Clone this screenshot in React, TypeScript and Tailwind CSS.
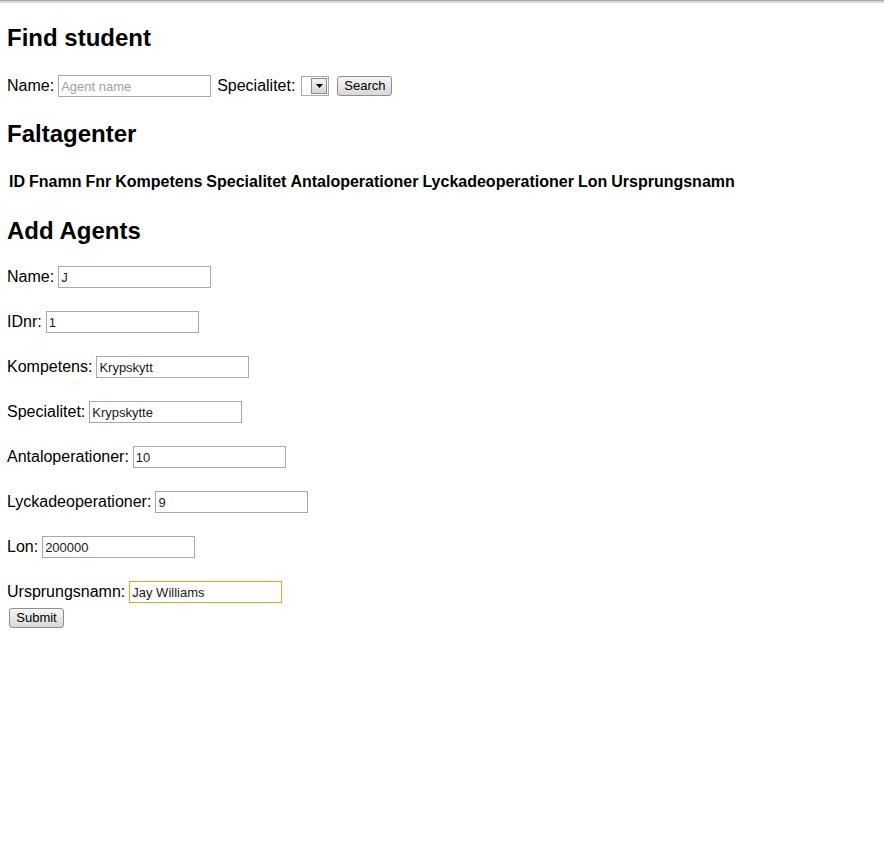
import React from "react";

const inputCls =
  "h-[22px] w-[153px] border border-[#a9a9a9] bg-white px-[2px] text-[13px] leading-[18px] text-[#1a1a1a] outline-none";

function Row({ label, value, focused }: { label: string; value: string; focused?: boolean }) {
  return (
    <div className="flex h-[22px] items-center">
      <span className="text-[16px] leading-[18px]">{label}</span>
      <input
        readOnly
        value={value}
        className={
          "ml-[4px] " +
          inputCls +
          (focused ? " !border-[#e5a53a] shadow-[0_0_1px_#f0c070]" : "")
        }
      />
    </div>
  );
}

export default function App() {
  const cols = [
    "ID",
    "Fnamn",
    "Fnr",
    "Kompetens",
    "Specialitet",
    "Antaloperationer",
    "Lyckadeoperationer",
    "Lon",
    "Ursprungsnamn",
  ];
  const rows: [string, string, boolean?][] = [
    ["Name:", "J"],
    ["IDnr:", "1"],
    ["Kompetens:", "Krypskytt"],
    ["Specialitet:", "Krypskytte"],
    ["Antaloperationer:", "10"],
    ["Lyckadeoperationer:", "9"],
    ["Lon:", "200000"],
    ["Ursprungsnamn:", "Jay Williams", true],
  ];
  return (
    <div
      className="min-h-[859px] w-[884px] bg-white text-black"
      style={{ fontFamily: '"Liberation Sans", Arial, sans-serif' }}
    >
      <div className="h-[1px] bg-[#a8a8a8]" />
      <div className="h-[2px] bg-[#d8d8d8]" />
      <div className="px-[7px]">
        <h2 className="mt-[21px] text-[24px] font-bold leading-[28px]">Find student</h2>
        <div className="mt-[23px] flex h-[22px] items-center">
          <span className="text-[16px] leading-[18px]">Name:</span>
          <input
            readOnly
            placeholder="Agent name"
            className={"ml-[4px] " + inputCls + " placeholder:text-[#a0a0a0]"}
          />
          <span className="ml-[6px] text-[16px] leading-[18px]">Specialitet:</span>
          <div className="ml-[6px] flex h-[20px] w-[28px] items-stretch border border-[#a9a9a9] bg-white">
            <div className="flex-1" />
            <div className="my-[1px] mr-[1px] flex w-[16px] items-center justify-center border border-[#8a8a8a] bg-gradient-to-b from-[#f4f4f4] to-[#d4d4d4]">
              <svg width="7" height="4" viewBox="0 0 7 4">
                <path d="M0 0 H7 L3.5 4 Z" fill="#000" />
              </svg>
            </div>
          </div>
          <button className="ml-[8px] flex h-[20px] w-[55px] items-center justify-center rounded-[3px] border border-[#8e8e8e] bg-gradient-to-b from-[#f6f6f6] to-[#d8d8d8] text-[13px] leading-[16px]">
            Search
          </button>
        </div>
        <h2 className="mt-[23px] text-[24px] font-bold leading-[28px]">Faltagenter</h2>
        <div className="mt-[25px] flex gap-[4px] pl-[2px] text-[16px] font-bold leading-[18px]">
          {cols.map((c) => (
            <span key={c}>{c}</span>
          ))}
        </div>
        <h2 className="mt-[26px] text-[24px] font-bold leading-[28px]">Add Agents</h2>
        <div className="mt-[21px] flex flex-col gap-[23px]">
          {rows.map(([l, v, f]) => (
            <Row key={l} label={l} value={v} focused={f} />
          ))}
        </div>
        <button className="ml-[2px] mt-[5px] flex h-[20px] w-[55px] items-center justify-center rounded-[3px] border border-[#8e8e8e] bg-gradient-to-b from-[#f6f6f6] to-[#d8d8d8] text-[13px] leading-[16px]">
          Submit
        </button>
      </div>
    </div>
  );
}
